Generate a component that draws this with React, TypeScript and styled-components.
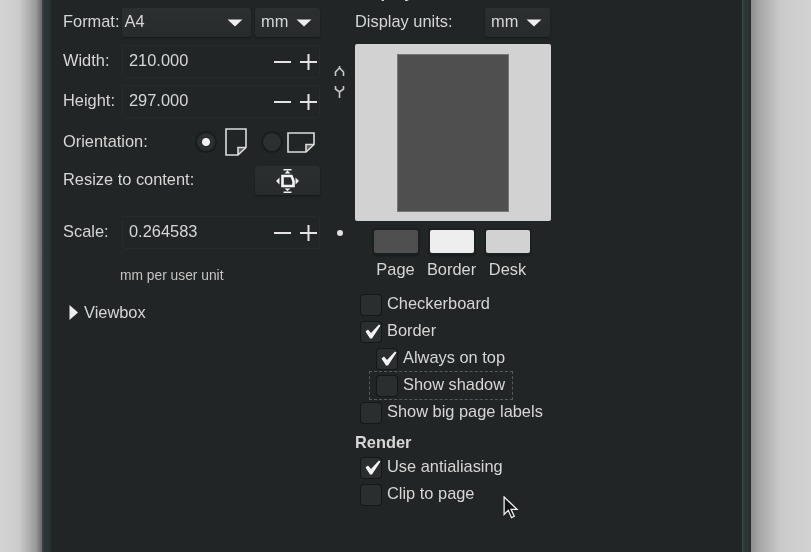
import { createGlobalStyle, styled } from "styled-components";

const GlobalStyle = createGlobalStyle`
  html, body {
    margin: 0;
    padding: 0;
    height: 552px;
    overflow: hidden;
    background: #d2d2d2;
  }
  #root {
    height: 552px;
  }
`;

function Arrow() {
  return (
    <svg width="16" height="8" viewBox="0 0 16 8">
      <path d="M0.5 0.5 H15.5 L8 7.5 Z" fill="#eeeeee" />
    </svg>
  );
}

function Stepper({ value }: { value: string }) {
  return (
    <Spin>
      <RowLabel>{value}</RowLabel>
      <svg width="44" height="16" viewBox="0 0 44 16">
        <path d="M0 8 H17 M26 8 H43 M34.5 0 V16" stroke="#e4e4e4" strokeWidth="2" fill="none" />
      </svg>
    </Spin>
  );
}

function PageIcon({ landscape }: { landscape?: boolean }) {
  return landscape ? (
    <svg width="28" height="21" viewBox="0 0 28 21">
      <path d="M19 20 V12.5 H27 Z" fill="#5c5c5c" />
      <path
        d="M1 1 H27 V12.5 L19 20 H1 Z M19 20 V12.5 H27"
        stroke="#dcdcdc"
        strokeWidth="1.6"
        fill="none"
      />
    </svg>
  ) : (
    <svg width="22" height="28" viewBox="0 0 22 28">
      <path d="M13 27 V19.5 H21 Z" fill="#5c5c5c" />
      <path
        d="M1 1 H21 V19.5 L13 27 H1 Z M13 27 V19.5 H21"
        stroke="#dcdcdc"
        strokeWidth="1.6"
        fill="none"
      />
    </svg>
  );
}

function ResizeIcon() {
  return (
    <svg width="23" height="24" viewBox="0 0 23 24">
      <path d="M6.5 7 H15.5 L17.5 12 V17 H6.5 Z" stroke="#f4f4f4" strokeWidth="2.6" fill="none" />
      <path
        d="M11.5 1.5 L14.5 4.5 H8.5 Z M7.5 0 H15.5 V1.5 H7.5 Z M7.5 22.5 H15.5 V24 H7.5 Z M11.5 22 L14.5 19.5 H8.5 Z M0 12 L3.5 8.5 V15.5 Z M23 12 L19.5 8.5 V15.5 Z"
        fill="#f0f0f0"
      />
    </svg>
  );
}

function Check({
  label,
  checked,
  nested,
  focused,
}: {
  label: string;
  checked?: boolean;
  nested?: boolean;
  focused?: boolean;
}) {
  return (
    <CheckRow $nested={nested} $focused={focused}>
      <CheckBox>
        {checked && (
          <svg width="16" height="15" viewBox="0 0 16 15">
            <path d="M0.5 7.5 L3 5.5 L6 9 L14 0.5 L15.5 1.5 L7 14.5 L5 14.5 Z" fill="#f4f4f4" />
          </svg>
        )}
      </CheckBox>
      <RowLabel>{label}</RowLabel>
    </CheckRow>
  );
}

export default function App() {
  return (
    <Desk>
      <GlobalStyle />
      <ShadowLeft />
      <Window>
        <WindowEdge />
        <Panel>
          <LeftColumn>
            <FormatRow>
              <FormatLabel>Format:</FormatLabel>
              <Combo $grow>
                <RowLabel>A4</RowLabel>
                <Arrow />
              </Combo>
              <Combo>
                <RowLabel>mm</RowLabel>
                <Arrow />
              </Combo>
            </FormatRow>
            <SpinRow>
              <RowLabel>Width:</RowLabel>
              <Stepper value="210.000" />
            </SpinRow>
            <SpinRow>
              <RowLabel>Height:</RowLabel>
              <Stepper value="297.000" />
            </SpinRow>
            <OrientationRow>
              <RowLabel>Orientation:</RowLabel>
              <OrientationChoices>
                <Choice $gap={8}>
                  <Radio $on />
                  <PageIcon />
                </Choice>
                <Choice $gap={4}>
                  <Radio />
                  <PageIcon landscape />
                </Choice>
              </OrientationChoices>
            </OrientationRow>
            <ResizeRow>
              <RowLabel>Resize to content:</RowLabel>
              <IconButton>
                <ResizeIcon />
              </IconButton>
            </ResizeRow>
            <ScaleRow>
              <RowLabel>Scale:</RowLabel>
              <Stepper value="0.264583" />
            </ScaleRow>
            <Hint>mm per user unit</Hint>
            <Expander>
              <svg width="9" height="15" viewBox="0 0 9 15">
                <path d="M0.5 0 L9 7.5 L0.5 15 Z" fill="#eeeeee" />
              </svg>
              <span>Viewbox</span>
            </Expander>
          </LeftColumn>
          <LinkColumn>
            <LinkIcon>
              <svg width="11" height="32" viewBox="0 0 11 32">
                <path
                  d="M1.5 10 V6 L5.5 2 L9.5 6 V10 M1.5 20 V23 L5.5 26 L9.5 23 V20 M5.5 26 V32 M5.5 0 V2"
                  stroke="#c8c8c8"
                  strokeWidth="1.6"
                  fill="none"
                />
              </svg>
            </LinkIcon>
            <LinkDot />
          </LinkColumn>
          <RightColumn>
            <ClippedTitle>Display</ClippedTitle>
            <UnitsRow>
              <RowLabel>Display units:</RowLabel>
              <Combo>
                <RowLabel>mm</RowLabel>
                <Arrow />
              </Combo>
            </UnitsRow>
            <Preview>
              <PreviewPage />
            </Preview>
            <Swatches>
              <SwatchItem>
                <Swatch $color="#4f4f4f" />
                <span>Page</span>
              </SwatchItem>
              <SwatchItem>
                <Swatch $color="#eeeeee" />
                <span>Border</span>
              </SwatchItem>
              <SwatchItem>
                <Swatch $color="#d2d2d2" />
                <span>Desk</span>
              </SwatchItem>
            </Swatches>
            <CheckList>
              <Check label="Checkerboard" />
              <Check label="Border" checked />
              <Check label="Always on top" checked nested />
              <Check label="Show shadow" nested focused />
              <Check label="Show big page labels" />
            </CheckList>
            <SectionTitle>Render</SectionTitle>
            <CheckList>
              <Check label="Use antialiasing" checked />
              <Cursor>
                <Check label="Clip to page" />
                <CursorGlyph width="17" height="24" viewBox="0 0 18 26">
                  <path
                    d="M1 1 V20 L5.5 15.5 L9 23.5 L12 22 L8.5 14.5 H15 Z"
                    fill="#111111"
                    stroke="#eeeeee"
                    strokeWidth="1.4"
                  />
                </CursorGlyph>
              </Cursor>
            </CheckList>
          </RightColumn>
        </Panel>
        <WindowEdge />
      </Window>
      <ShadowRight />
    </Desk>
  );
}

const Desk = styled.div`
  display: flex;
  width: 811px;
  height: 552px;
  overflow: hidden;
  background: #d2d2d2;
  font-family: "Liberation Sans", Arial, sans-serif;
  font-size: 16.4px;
  color: #d6d6d6;
  filter: blur(0.45px);
`;

const ShadowLeft = styled.div`
  width: 42px;
  flex: none;
  background: linear-gradient(to right, #d4d4d4 0%, #cccccc 45%, #9a9a9a 85%, #6a6a6a 100%);
`;

const ShadowRight = styled.div`
  flex: 1;
  background: linear-gradient(to left, #d2d2d2 0%, #cbcbcb 50%, #a8a8a8 85%, #8e8e8e 100%);
`;

const Window = styled.div`
  width: 709px;
  flex: none;
  display: flex;
  background: #212526;
  overflow: hidden;
`;

const WindowEdge = styled.div`
  width: 9px;
  flex: none;
  background: linear-gradient(to right, #3f4546 0%, #2b3536 30%, #2b3536 70%, #252b2c 100%);
`;

const Panel = styled.div`
  flex: 1;
  display: flex;
  padding: 8px 0 0 12px;
`;

const LeftColumn = styled.div`
  width: 257px;
  flex: none;
  display: flex;
  flex-direction: column;
`;

const LinkColumn = styled.div`
  width: 35px;
  flex: none;
  display: flex;
  flex-direction: column;
  align-items: center;
  padding-left: 4px;
  box-sizing: border-box;
`;

const LinkIcon = styled.div`
  margin-top: 58px;
  height: 32px;
`;

const LinkDot = styled.div`
  width: 6px;
  height: 6px;
  border-radius: 50%;
  background: #e0e0e0;
  margin-top: 132px;
`;

const RightColumn = styled.div`
  width: 200px;
  flex: none;
  display: flex;
  flex-direction: column;
`;

const RowLabel = styled.span`
  white-space: nowrap;
  padding-bottom: 2px;
`;

const FormatLabel = styled(RowLabel)`
  margin-right: -1px;
`;

const FormatRow = styled.div`
  display: flex;
  align-items: center;
  gap: 4px;
  height: 29px;
  margin-bottom: 1px;
`;

const Combo = styled.div<{ $grow?: boolean }>`
  display: flex;
  align-items: center;
  justify-content: space-between;
  box-sizing: border-box;
  height: 29px;
  flex: ${(p) => (p.$grow ? "1" : "none")};
  width: ${(p) => (p.$grow ? "auto" : "65px")};
  padding: 0 8px 0 ${(p) => (p.$grow ? "2px" : "6px")};
  border-radius: 3px;
  background: linear-gradient(to bottom, #2b2f30, #272b2c);
  box-shadow: 0 1px 2px #151718;
`;

const SpinRow = styled.div`
  display: flex;
  align-items: center;
  justify-content: space-between;
  height: 33px;
  margin-top: 7px;
`;

const ScaleRow = styled(SpinRow)`
  margin-top: 21px;
`;

const Spin = styled.div`
  display: flex;
  align-items: center;
  justify-content: space-between;
  box-sizing: border-box;
  width: 198px;
  height: 33px;
  padding: 0 1px 0 6px;
  border: 1px solid #272b2c;
  border-radius: 3px;
  background: #212526;
`;

const OrientationRow = styled.div`
  display: flex;
  align-items: center;
  height: 28px;
  margin-top: 10px;
`;

const OrientationChoices = styled.div`
  display: flex;
  align-items: center;
  margin-left: auto;
  margin-right: 5px;
  gap: 14px;
`;

const Choice = styled.div<{ $gap: number }>`
  display: flex;
  align-items: center;
  gap: ${(p) => p.$gap}px;
`;

const Radio = styled.div<{ $on?: boolean }>`
  width: 22px;
  height: 22px;
  box-sizing: border-box;
  border-radius: 50%;
  border: 2px solid #1a1c1d;
  background: ${(p) =>
    p.$on
      ? "radial-gradient(circle, #f4f4f4 0 3.5px, #2b2f30 4.5px)"
      : "#2b2f30"};
`;

const ResizeRow = styled.div`
  display: flex;
  align-items: center;
  justify-content: space-between;
  height: 29px;
  margin-top: 10px;
`;

const IconButton = styled.div`
  width: 65px;
  height: 29px;
  display: flex;
  align-items: center;
  justify-content: center;
  border-radius: 3px;
  background: linear-gradient(to bottom, #2b2f30, #272b2c);
  box-shadow: 0 1px 2px #151718;
`;

const Hint = styled.div`
  margin-top: 19px;
  margin-left: 57px;
  font-size: 13.8px;
  color: #c4c4c4;
`;

const Expander = styled.div`
  display: flex;
  align-items: center;
  gap: 6px;
  margin-top: 20px;
  margin-left: 6px;
`;

const UnitsRow = styled.div`
  display: flex;
  align-items: center;
  justify-content: space-between;
  width: 195px;
  height: 29px;
`;

const Preview = styled.div`
  width: 196px;
  height: 177px;
  margin-top: 7px;
  display: flex;
  align-items: center;
  justify-content: center;
  border-radius: 2px;
  background: #d2d2d2;
`;

const PreviewPage = styled.div`
  width: 112px;
  height: 158px;
  box-sizing: border-box;
  border: 1px solid #777777;
  background: #4f4f4f;
`;

const Swatches = styled.div`
  display: flex;
  gap: 11px;
  margin: 9px 0 12px 18px;
`;

const SwatchItem = styled.div`
  width: 45px;
  display: flex;
  flex-direction: column;
  align-items: center;
  gap: 7px;
`;

const Swatch = styled.div<{ $color: string }>`
  width: 44px;
  height: 23px;
  border-radius: 2px;
  background: ${(p) => p.$color};
  box-shadow: 0 0 0 2px #1c1f20, 0 3px 2px #171a1b;
`;

const CheckList = styled.div`
  display: flex;
  flex-direction: column;
  margin-left: 6px;
`;

const CheckRow = styled.div<{ $nested?: boolean; $focused?: boolean }>`
  display: flex;
  align-items: center;
  gap: 6px;
  height: 27px;
  box-sizing: border-box;
  margin-left: ${(p) => (p.$nested ? "9px" : "0")};
  padding-left: ${(p) => (p.$nested ? "7px" : "0")};
  width: ${(p) => (p.$focused ? "142px" : "auto")};
  outline: ${(p) => (p.$focused ? "1px dashed #555a5b" : "none")};
  outline-offset: 0;
`;

const CheckBox = styled.div`
  width: 20px;
  height: 20px;
  flex: none;
  box-sizing: border-box;
  padding-top: 2px;
  display: flex;
  align-items: flex-start;
  justify-content: flex-end;
  border-radius: 3px;
  background: #2a2e2f;
  box-shadow: 0 0 0 1px #151718;
`;

const SectionTitle = styled.div`
  margin-top: 7px;
  margin-bottom: 2px;
  font-weight: bold;
  color: #d6d6d6;
`;

const ClippedTitle = styled(SectionTitle)`
  margin-top: -25px;
  margin-bottom: 6px;
  line-height: 19px;
`;

const Cursor = styled.div`
  position: relative;
`;

const CursorGlyph = styled.svg`
  position: absolute;
  left: 142px;
  top: 15px;
`;
